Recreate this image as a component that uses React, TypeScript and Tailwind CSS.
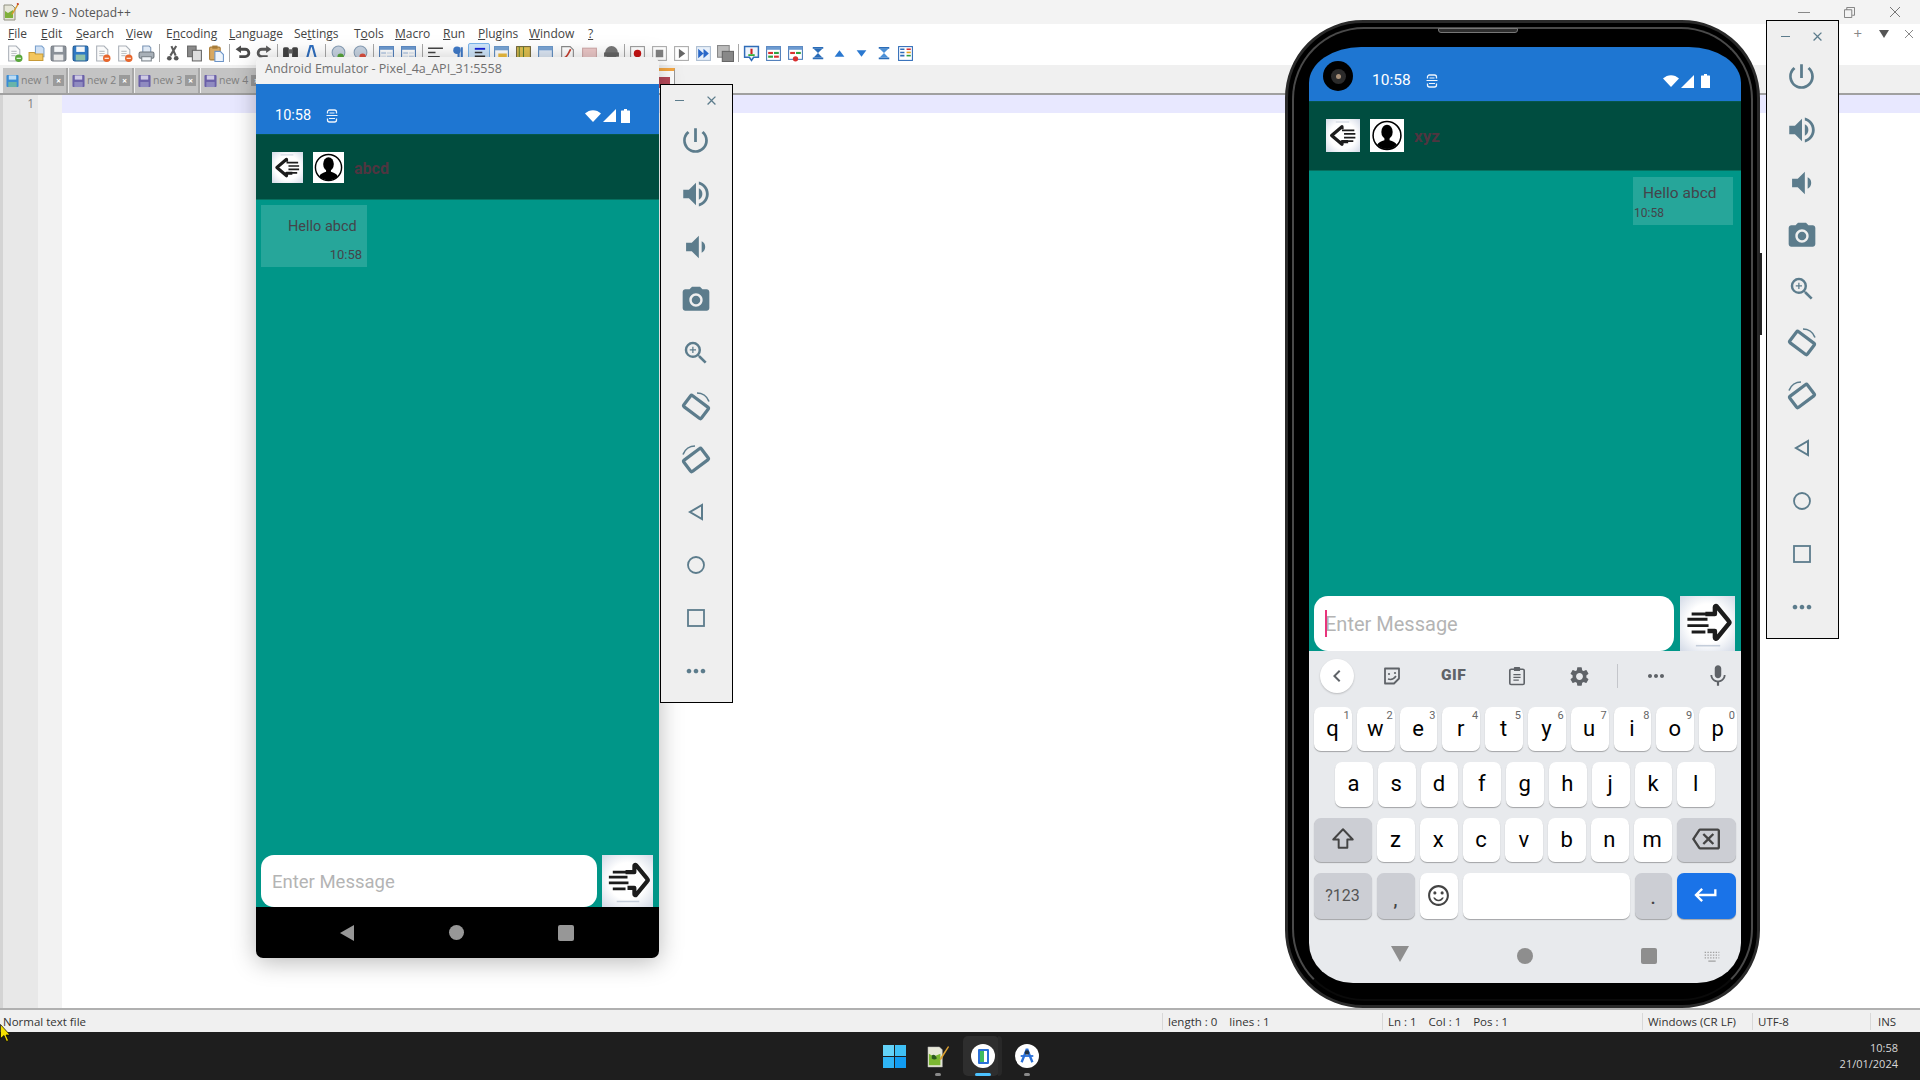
import React from "react";
import {
  MdPowerSettingsNew, MdVolumeUp, MdVolumeDown, MdPhotoCamera, MdZoomIn, MdMoreHoriz, MdSettings, MdMic,
  MdKeyboardReturn, MdOutlineSentimentSatisfied, MdOutlineBackspace, MdChevronLeft, MdClose,
} from "react-icons/md";

const NP = "font-['Open_Sans','Liberation_Sans',sans-serif]";
const RB = "font-['Roboto','Liberation_Sans',sans-serif]";

function U({ t, i }: { t: string; i: number }) {
  return (
    <span>
      {t.slice(0, i)}
      <span className="underline">{t[i]}</span>
      {t.slice(i + 1)}
    </span>
  );
}

const menus: [string, number, number][] = [
  ["File", 0, 33], ["Edit", 0, 35], ["Search", 0, 50], ["View", 0, 40], ["Encoding", 1, 63], ["Language", 0, 65],
  ["Settings", 2, 60], ["Tools", 1, 41], ["Macro", 0, 48], ["Run", 0, 35], ["Plugins", 0, 51], ["Window", 0, 59], ["?", 0, 12],
];

function ToolIcon({ k }: { k: string }) {
  const c = "w-[17px] h-[17px]";
  const doc = (badge?: string) => (
    <svg viewBox="0 0 16 16" className={c}>
      <path d="M2.5 1h7l3.500 3.500V15h-10.500z" fill="#fafafa" stroke="#aab0b8" />
      <path d="M5 6h5M5 8h5M5 10h4" stroke="#c0c4c8" />
      {badge && <circle cx="12" cy="12.500" r="3.500" fill={badge} />}
      {badge && <path d="M10 12.500h4" stroke="#fff" />}
    </svg>
  );
  const floppy = (f: string, l: string, s: string) => (
    <svg viewBox="0 0 16 16" className={c}>
      <rect x="1" y="1" width="14" height="14" rx="1.500" fill={f} stroke={s} />
      <rect x="4" y="1.500" width="8" height="5" fill="#f4f6f8" />
      <rect x="3.500" y="9" width="9" height="5.500" fill={l} />
    </svg>
  );
  const panel = (a: string, b: string) => (
    <svg viewBox="0 0 16 16" className={c}>
      <rect x="1.500" y="1.500" width="13" height="13" fill="#fff" stroke="#4a7ab8" />
      <rect x="1.500" y="1.500" width="13" height="3" fill="#6c9ad0" />
      <rect x="3" y="6.500" width="4.500" height="2" fill={a} />
      <rect x="8.500" y="6.500" width="4.500" height="2" fill={b} />
      <rect x="3" y="10" width="4.500" height="2" fill={b} />
      <rect x="8.500" y="10" width="4.500" height="2" fill={a} />
    </svg>
  );
  switch (k) {
    case "new": return doc("#5aa83c");
    case "open": return (
      <svg viewBox="0 0 16 16" className={c}>
        <path d="M7 1h6l2 2v8H7z" fill="#cfe0f4" stroke="#7aa0cc" />
        <path d="M1 7h5l1 1.500h7v6H1z" fill="#f3c65f" stroke="#c79a38" />
      </svg>
    );
    case "save": return floppy("#8a9098", "#e8e8e8", "#767c84");
    case "saveall": return floppy("#2f79c4", "#8fc0a8", "#20588f");
    case "close": return doc("#e8662c");
    case "closeall": return doc("#e8662c");
    case "print": return (
      <svg viewBox="0 0 16 16" className={c}>
        <path d="M4.500 1h6l1.500 1.500V7h-7.500z" fill="#dfe9f5" stroke="#7a94b4" />
        <rect x="1" y="6.500" width="14" height="6" rx="1.500" fill="#a8b0b8" stroke="#6c747c" />
        <rect x="3.500" y="11" width="9" height="4" fill="#eef2f6" stroke="#7a828a" />
      </svg>
    );
    case "cut": return (
      <svg viewBox="0 0 16 16" className={c}>
        <path d="M11.500 1L6 10M7 1l4 9" stroke="#5c5c5c" strokeWidth="2" fill="none" />
        <circle cx="5" cy="12.500" r="2.200" fill="#555" /><circle cx="11.500" cy="12.500" r="2.200" fill="#555" />
      </svg>
    );
    case "copy": return (
      <svg viewBox="0 0 16 16" className={c}>
        <rect x="1.500" y="1" width="8" height="10" fill="#8a8a8a" stroke="#666" />
        <rect x="6" y="5" width="8.500" height="10" fill="#dcdcdc" stroke="#666" />
      </svg>
    );
    case "paste": return (
      <svg viewBox="0 0 16 16" className={c}>
        <rect x="1.500" y="2" width="10" height="12" rx="1" fill="#d8a860" stroke="#a87c38" />
        <rect x="4" y="0.500" width="5" height="3" fill="#a87c38" />
        <path d="M6.500 6h5l3 3v6.500h-8z" fill="#eef4fb" stroke="#6c94c8" />
      </svg>
    );
    case "undo": return (
      <svg viewBox="0 0 16 16" className={c}>
        <path d="M5 4h5.500a3.500 3.500 0 010 7H5" stroke="#4a4a4a" strokeWidth="2.600" fill="none" />
        <path d="M6.500 0.500v7L1.500 4z" fill="#4a4a4a" />
      </svg>
    );
    case "redo": return (
      <svg viewBox="0 0 16 16" className={c}>
        <path d="M11 4H5.500a3.500 3.500 0 000 7H11" stroke="#5a5a5a" strokeWidth="2.600" fill="none" />
        <path d="M9.500 0.500v7l5-3.500z" fill="#5a5a5a" />
      </svg>
    );
    case "find": return (
      <svg viewBox="0 0 16 16" className={c}>
        <rect x="1" y="2" width="5.500" height="12" rx="1.500" fill="#444" />
        <rect x="9.500" y="2" width="5.500" height="12" rx="1.500" fill="#444" />
        <rect x="6" y="4" width="4" height="4" fill="#666" />
      </svg>
    );
    case "replace": return (
      <svg viewBox="0 0 16 16" className={c}>
        <path d="M3 12L6 1h2l3 11" stroke="#2f6fc0" strokeWidth="2" fill="none" />
        <path d="M9 13h6" stroke="#2f6fc0" strokeWidth="2" />
      </svg>
    );
    case "zin": case "zout": return (
      <svg viewBox="0 0 16 16" className={c}>
        <circle cx="8" cy="7" r="6" fill="#c8d4e2" stroke="#8aa0b8" />
        <circle cx="10" cy="11" r="3" fill={k === "zin" ? "#58a83c" : "#e05040"} />
      </svg>
    );
    case "win1": return panel("#c8d8ec", "#e4ecf6");
    case "wrap": return (
      <svg viewBox="0 0 16 16" className={c}>
        <path d="M1 3h14M1 7h7M1 11h11" stroke="#444" strokeWidth="1.500" />
      </svg>
    );
    case "para": return (
      <svg viewBox="0 0 16 16" className={c}>
        <path d="M9 2v12M12 2v12" stroke="#3f7ac8" strokeWidth="2" /><circle cx="7.500" cy="5" r="3.500" fill="#3f7ac8" />
      </svg>
    );
    case "indent": return (
      <div className="w-[22px] h-[20px] bg-[#cfe6fb] border border-[#7ab4ea] flex items-center justify-center rounded-[2px]">
        <svg viewBox="0 0 16 16" className="w-[15px] h-[15px]">
          <path d="M3 3h11" stroke="#1420d8" strokeWidth="2" />
          <path d="M3 7h8M3 11h11" stroke="#333" strokeWidth="1.500" />
        </svg>
      </div>
    );
    case "yellow": return (
      <svg viewBox="0 0 16 16" className={c}>
        <rect x="1.500" y="1.500" width="13" height="13" fill="#fff" stroke="#5a8ac0" />
        <rect x="1.500" y="1.500" width="13" height="3.500" fill="#78a4d4" />
        <rect x="5" y="8" width="8" height="4" fill="#f0c040" />
      </svg>
    );
    case "map": return (
      <svg viewBox="0 0 16 16" className={c}>
        <rect x="1.500" y="1.500" width="13" height="13" fill="#e0c050" stroke="#70643a" />
        <path d="M4 1.500v13M8 1.500v13" stroke="#608030" />
      </svg>
    );
    case "lang": return (
      <svg viewBox="0 0 16 16" className={c}>
        <rect x="1.500" y="1.500" width="13" height="13" fill="#dde8f6" stroke="#5a8ac0" />
        <rect x="1.500" y="1.500" width="13" height="3.500" fill="#7aa4d4" />
      </svg>
    );
    case "fn": return (
      <svg viewBox="0 0 16 16" className={c}>
        <path d="M2.500 1.500h8l3 3v10h-11z" fill="#fff" stroke="#8a8a8a" />
        <path d="M5 12c3-1 4-5 6-8" stroke="#c84030" strokeWidth="1.600" fill="none" />
      </svg>
    );
    case "folder": return (
      <svg viewBox="0 0 16 16" className={c}>
        <rect x="1.500" y="3" width="13" height="10" fill="#ecc8c8" stroke="#d0a8a8" />
      </svg>
    );
    case "mon": return (
      <svg viewBox="0 0 16 16" className={c}>
        <circle cx="8" cy="7" r="6" fill="#777" /><rect x="1" y="7" width="14" height="4" fill="#666" />
      </svg>
    );
    case "rec": return (
      <svg viewBox="0 0 16 16" className={c}>
        <rect x="1.500" y="1.500" width="13" height="13" fill="#fff" stroke="#9a9a9a" />
        <circle cx="8" cy="8" r="3.500" fill="#c81414" />
      </svg>
    );
    case "stop": return (
      <svg viewBox="0 0 16 16" className={c}>
        <rect x="1.500" y="1.500" width="13" height="13" fill="#fff" stroke="#aaa" />
        <rect x="4.500" y="4.500" width="7" height="7" fill="#808080" />
      </svg>
    );
    case "play": return (
      <svg viewBox="0 0 16 16" className={c}>
        <rect x="1.500" y="1.500" width="13" height="13" fill="#fff" stroke="#aaa" />
        <path d="M5.500 3.500v9l6-4.500z" fill="#666" />
      </svg>
    );
    case "ff": return (
      <svg viewBox="0 0 16 16" className={c}>
        <rect x="1.500" y="1.500" width="13" height="13" fill="#e8f0fa" stroke="#aabbd0" />
        <path d="M3 3.500v9L8 8zM8 3.500v9l5-4.500z" fill="#2a68c8" />
      </svg>
    );
    case "savem": return (
      <svg viewBox="0 0 16 16" className={c}>
        <rect x="0.500" y="0.500" width="11" height="11" fill="#bbb" stroke="#888" />
        <rect x="5" y="6" width="10.500" height="9.500" fill="#888" stroke="#666" />
      </svg>
    );
    case "bm": return (
      <svg viewBox="0 0 16 16" className={c}>
        <path d="M1.500 1.500h13v10H10l-2 3-2-3H1.500z" fill="#eef4fb" stroke="#2f6cb8" strokeWidth="1.400" />
        <path d="M8 3.500v5" stroke="#d02020" strokeWidth="2" /><path d="M5 9.500h6" stroke="#20a020" strokeWidth="1.500" />
      </svg>
    );
    case "diff": return panel("#d83030", "#30a040");
    case "diffx": return (
      <svg viewBox="0 0 16 16" className={c}>
        <rect x="1.500" y="1.500" width="13" height="12" fill="#fff" stroke="#4a7ab8" />
        <rect x="1.500" y="1.500" width="13" height="3" fill="#6c9ad0" />
        <rect x="3" y="6.500" width="4.500" height="2" fill="#d83030" />
        <rect x="8.500" y="6.500" width="4.500" height="2" fill="#30a040" />
        <circle cx="8" cy="13" r="2.500" fill="#d83030" />
      </svg>
    );
    case "first": return (
      <svg viewBox="0 0 16 16" className="w-[14px] h-[14px]">
        <path d="M2 2h12M2 14h12" stroke="#2a6cb8" strokeWidth="2" />
        <path d="M3 3l5 5 5-5zM3 13l5-5 5 5z" fill="#2a6cb8" />
      </svg>
    );
    case "up": return (
      <svg viewBox="0 0 16 16" className="w-[13px] h-[13px]"><path d="M2 12L8 4l6 8z" fill="#2a78d0" /></svg>
    );
    case "down": return (
      <svg viewBox="0 0 16 16" className="w-[13px] h-[13px]"><path d="M2 4l6 8 6-8z" fill="#2a78d0" /></svg>
    );
    case "last": return (
      <svg viewBox="0 0 16 16" className="w-[14px] h-[14px]">
        <path d="M2 2h12M2 14h12" stroke="#2a6cb8" strokeWidth="2" />
        <path d="M3 3l5 5 5-5zM3 13l5-5 5 5z" fill="#4a90d8" />
      </svg>
    );
    case "cols": return (
      <svg viewBox="0 0 16 16" className={c}>
        <rect x="1.500" y="1.500" width="13" height="13" fill="#fff" stroke="#2f6cb8" />
        <path d="M3 4h4M3 7h4M3 10h4" stroke="#2f6cb8" strokeWidth="1.500" />
        <path d="M9 4h4" stroke="#d83030" strokeWidth="1.500" /><path d="M9 7h4" stroke="#e8a020" strokeWidth="1.500" /><path d="M9 10h4" stroke="#30a040" strokeWidth="1.500" />
      </svg>
    );
    default: return null;
  }
}

const toolbar = [
  "new", "open", "save", "saveall", "close", "closeall", "print", "|", "cut", "copy", "paste", "|", "undo", "redo", "|",
  "find", "replace", "|", "zin", "zout", "|", "win1", "win1", "|", "wrap", "para", "indent", "yellow", "map", "lang", "fn", "folder", "mon", "|",
  "rec", "stop", "play", "ff", "savem", "|", "bm", "diff", "diffx", "first", "up", "down", "last", "cols",
];

function Floppy({ purple }: { purple?: boolean }) {
  return (
    <svg viewBox="0 0 14 14" className="w-[13px] h-[14px] shrink-0">
      <rect x="0.500" y="0.500" width="13" height="13" rx="1" fill={purple ? "#6a60a8" : "#3a8cd4"} />
      <rect x="3" y="1" width="8" height="4.500" fill={purple ? "#cfcbe4" : "#bcdcf4"} />
      <rect x="2.500" y="8" width="9" height="5.500" fill={purple ? "#8f8ac0" : "#6ab4a8"} />
    </svg>
  );
}

function Tab({ n, purple }: { n: number; purple?: boolean }) {
  return (
    <div className="w-[65px] h-full bg-[#c4c4c4] border-r-[2px] border-[#a8a8a8] flex items-center pl-[3px] gap-[2px] mr-[1px] shrink-0">
      <Floppy purple={purple} />
      <span className="text-[10.500px] text-[#808080] w-[30px] whitespace-nowrap">new {n}</span>
      <span className="w-[11px] h-[11px] bg-[#9a9a9a] text-white text-[9px] leading-[11px] text-center font-bold shrink-0">×</span>
    </div>
  );
}

function Notepad() {
  return (
    <div className={`flex flex-col h-[1032px] bg-white ${NP} text-[#333]`}>
      <div className="h-[24px] bg-[#f3f3f3] flex items-center relative shrink-0">
        <svg viewBox="0 0 16 18" className="w-[16px] h-[18px] ml-[3px]">
          <path d="M1 2h8l3 3v12H1z" fill="#e6e6d8" stroke="#909080" />
          <path d="M2 8l3 2 5-3v8H2z" fill="#7fb03a" />
          <path d="M15 0l1 1-6 10-2 1 1-2z" fill="#d89a2c" />
          <path d="M14.500 0l1.500 1-1 1-1.500-1z" fill="#c02020" />
        </svg>
        <span className="ml-[6px] text-[12px] text-[#555] pt-[1px]">new 9 - Notepad++</span>
        <div className="ml-auto flex items-center h-full text-[#666]">
          <span className="w-[12px] h-px bg-[#888] block mr-[34px]" />
          <svg viewBox="0 0 12 12" className="w-[11px] h-[11px] mr-[34px]"><path d="M0.500 3h8v8.500h-8zM3 3V0.500h8.500V9H9" fill="none" stroke="#777" /></svg>
          <svg viewBox="0 0 12 12" className="w-[12px] h-[12px] mr-[19px]"><path d="M1 1l10 10M11 1L1 11" stroke="#777" /></svg>
        </div>
      </div>
      <div className="h-[19px] flex items-center text-[12px] text-[#444] pl-[8px] shrink-0">
        {menus.map(([t, i, w]) => (
          <div key={t} className="shrink-0" style={{ width: w }}><U t={t} i={i} /></div>
        ))}
        <div className="ml-auto flex items-center pr-[6px] text-[#888]">
          <span className="text-[15px] leading-none mr-[17px]">+</span>
          <svg viewBox="0 0 10 8" className="w-[10px] h-[8px] mr-[15px]"><path d="M0 0h10L5 8z" fill="#555" /></svg>
          <svg viewBox="0 0 10 10" className="w-[10px] h-[10px]"><path d="M1 1l8 8M9 1L1 9" stroke="#888" /></svg>
        </div>
      </div>
      <div className="h-[23px] flex items-center pl-[3px] pb-[2px] border-b border-[#f0f0f0] shrink-0">
        {toolbar.map((k, i) =>
          k === "|" ? (
            <div key={i} className="w-[4.200px] flex justify-center shrink-0"><div className="w-px h-[18px] bg-[#a8a8a8]" /></div>
          ) : (
            <div key={i} className="w-[22px] h-[20px] flex items-center justify-center shrink-0"><ToolIcon k={k} /></div>
          ),
        )}
      </div>
      <div className="h-[27px] bg-[#f0f0f0] flex items-stretch pl-[3px] pt-[2px] shrink-0">
        <Tab n={1} />
        <Tab n={2} purple />
        <Tab n={3} purple />
        <Tab n={4} purple />
        <div className="w-[336px] shrink-0" />
        <div className="w-[72px] bg-white border-t-[3px] border-[#f5a742] border-r border-r-[#999] flex items-center justify-end pr-[4px] shrink-0">
          <span className="w-[11px] h-[11px] bg-[#b84a5a]" />
        </div>
      </div>
      <div className="flex-1 flex border-t-[2px] border-[#a0a0a0] border-b-[2px] border-b-[#b0b0b0] min-h-0">
        <div className="w-[62px] bg-[#e8e8e8] border-l-[3px] border-[#d4d4d4] flex shrink-0">
          <div className="w-[35px] text-right text-[12px] text-[#808080] leading-[18px] pr-[4px]">1</div>
          <div className="flex-1 bg-[#f2f2f2]" />
        </div>
        <div className="flex-1"><div className="h-[18px] bg-[#e8e8ff]" /></div>
      </div>
      <div className="h-[22px] bg-[#f0f0f0] flex items-center text-[11.500px] text-[#333] pt-[1px] shrink-0">
        <div className="w-[1162px] pl-[3px]">Normal text file</div>
        <div className="w-[220px] pl-[5px] border-l border-[#d8d8d8]">length : 0 &nbsp;&nbsp; lines : 1</div>
        <div className="w-[260px] pl-[5px] border-l border-[#d8d8d8]">Ln : 1 &nbsp;&nbsp; Col : 1 &nbsp;&nbsp; Pos : 1</div>
        <div className="w-[110px] pl-[5px] border-l border-[#d8d8d8]">Windows (CR LF)</div>
        <div className="w-[118px] pl-[5px] border-l border-[#d8d8d8]">UTF-8</div>
        <div className="flex-1 pl-[7px] border-l border-[#d8d8d8]">INS</div>
      </div>
    </div>
  );
}

function Taskbar() {
  return (
    <div className={`h-[48px] bg-[#1e1e1e] flex items-center justify-center relative ${NP}`}>
      <div className="w-[44px] flex justify-center">
        <div className="w-[23px] h-[23px] grid grid-cols-2 gap-[1px]">
          <div className="bg-[#63d2f7]" /><div className="bg-[#3fc0f5]" /><div className="bg-[#2fb4f5]" /><div className="bg-[#119cf2]" />
        </div>
      </div>
      <div className="w-[44px] flex flex-col items-center relative">
        <svg viewBox="0 0 24 24" className="w-[23px] h-[23px]">
          <path d="M1 2h12l3 3v18H1z" fill="#e8e8d8" stroke="#aaa" strokeWidth="0.500" />
          <path d="M2 9l5 3 7-3v12H2z" fill="#7cb832" />
          <path d="M5 11c2-2 4 0 5 2s-3 3-5 1z" fill="#2c5a1c" />
          <path d="M22 1l1 1-8 13-2 1 1-3z" fill="#dca030" />
        </svg>
        <div className="absolute top-[28px] w-[6px] h-[3px] rounded-full bg-[#8a8a8a]" />
      </div>
      <div className="w-[44px] flex justify-center relative">
        <div className="absolute top-[-8px] left-[3px] w-[36px] h-[40px] bg-[#2e2e2e] rounded-[5px]" />
        <div className="absolute top-[-8px] left-[38px] w-[4px] h-[40px] bg-[#282828] rounded-r-[4px]" />
        <div className="relative left-[1px] w-[24px] h-[24px] rounded-full bg-white flex items-center justify-center">
          <div className="w-[11px] h-[15px] border-[2px] border-[#2a70d8] rounded-[1px] flex"><div className="w-[4px] h-full bg-[#3fbc60]" /></div>
        </div>
        <div className="absolute top-[29px] left-[15px] w-[16px] h-[3px] rounded-full bg-[#4cc2ff]" />
      </div>
      <div className="w-[44px] flex justify-center relative">
        <div className="relative left-[1px] w-[24px] h-[24px] rounded-full bg-white flex items-center justify-center">
          <svg viewBox="0 0 20 20" className="w-[18px] h-[18px]">
            <path d="M10 2L4 17M10 2l6 15" stroke="#2a70d8" strokeWidth="2.600" fill="none" />
            <path d="M3 10h14" stroke="#2a70d8" strokeWidth="2" /><circle cx="10" cy="6" r="2.500" fill="#234" />
          </svg>
        </div>
        <div className="absolute top-[29px] left-[20px] w-[6px] h-[3px] rounded-full bg-[#8a8a8a]" />
      </div>
      <div className="absolute right-[22px] top-0 h-full flex flex-col justify-center items-end text-[11px] leading-[16px] text-[#d8d8d8]">
        <span>10:58</span>
        <span>21/01/2024</span>
      </div>
    </div>
  );
}

function RotateIcon({ flip }: { flip?: boolean }) {
  return (
    <svg viewBox="0 0 32 32" className={`w-[32px] h-[32px] ${flip ? "-scale-x-100" : ""}`}>
      <rect x="5" y="10" width="22" height="14" rx="1.500" transform="rotate(37 16 17)" fill="none" stroke="#5c7c8c" strokeWidth="3.200" />
      <path d="M17 3c5 0 10 3 12 8.500" fill="none" stroke="#5c7c8c" strokeWidth="1.600" />
    </svg>
  );
}

function Panel({ className }: { className: string }) {
  const cl = "w-[30px] h-[30px] text-[#5c7c8c]";
  const items = [
    <MdPowerSettingsNew className="w-[33px] h-[33px] text-[#5c7c8c]" />,
    <MdVolumeUp className="w-[34px] h-[34px] text-[#5c7c8c]" />,
    <MdVolumeDown className="w-[34px] h-[34px] text-[#5c7c8c]" />,
    <MdPhotoCamera className="w-[32px] h-[32px] text-[#5c7c8c]" />,
    <MdZoomIn className={cl} />,
    <RotateIcon />,
    <RotateIcon flip />,
    <svg viewBox="0 0 20 20" className="w-[20px] h-[20px]"><path d="M16 3v14L4 10z" fill="none" stroke="#5c7c8c" strokeWidth="2" /></svg>,
    <svg viewBox="0 0 20 20" className="w-[20px] h-[20px]"><circle cx="10" cy="10" r="8" fill="none" stroke="#5c7c8c" strokeWidth="1.800" /></svg>,
    <svg viewBox="0 0 20 20" className="w-[20px] h-[20px]"><rect x="2" y="2" width="16" height="16" fill="none" stroke="#5c7c8c" strokeWidth="1.800" /></svg>,
    <MdMoreHoriz className="w-[28px] h-[28px] text-[#5c7c8c]" />,
  ];
  return (
    <div className={`absolute w-[73px] h-[619px] bg-[#efefef] border-[1.500px] border-black flex flex-col ${className}`}>
      <div className="flex h-[29px] mt-[1px] items-center justify-between pl-[14px] pr-[13px] shrink-0">
        <div className="w-[9px] h-[1.500px] bg-[#5c7c8c]" />
        <MdClose className="w-[15px] h-[15px] text-[#5c7c8c]" />
      </div>
      <div className="flex flex-col items-center pr-[2px] -mt-[1px]">
        {items.map((it, i) => (
          <div key={i} className="h-[53.100px] flex items-center justify-center">{it}</div>
        ))}
      </div>
    </div>
  );
}

function StatusIcons({ tight }: { tight?: boolean }) {
  return (
    <div className="flex items-center">
      <svg viewBox="0 0 16 12" className="w-[16px] h-[12px]"><path d="M0 3.500C4.500-1 11.500-1 16 3.500L8 12z" fill="#fff" /></svg>
      <svg viewBox="0 0 13 13" className="w-[13px] h-[13px] ml-[2px]"><path d="M13 0v13H0z" fill="#fff" /></svg>
      <svg viewBox="0 0 9 14" className={`w-[9px] h-[14px] ${tight ? "ml-[5px]" : "ml-[7px]"}`}><path d="M3 0h3v1.500h2.500a.5.5 0 01.5.5v11.500a.5.5 0 01-.5.5H.5a.5.5 0 01-.5-.5V2a.5.5 0 01.5-.5H3z" fill="#fff" /></svg>
    </div>
  );
}

function SimIcon() {
  return (
    <svg viewBox="0 0 12 14" className="w-[12px] h-[14px] block">
      <path d="M1.500 4.500V3a2 2 0 012-2h5a2 2 0 012 2v1.500M1.500 9.500V11a2 2 0 002 2h5a2 2 0 002-2V9.500" fill="none" stroke="#f0f5fc" strokeWidth="1.300" />
      <path d="M0.500 6.500h11M3 9.500h6M3.500 4h5" stroke="#f0f5fc" strokeWidth="1.100" />
    </svg>
  );
}

function BackIcon({ className }: { className: string }) {
  return (
    <div className={`bg-[radial-gradient(circle,#ffffff_55%,#d2d9e6)] flex items-center justify-center ${className}`}>
      <svg viewBox="0 0 32 32" className="w-full h-full">
        <path d="M15 10V7.500L5 16l10 8.500V22H21" fill="none" stroke="#1c1c1c" strokeWidth="3.200" strokeLinejoin="round" />
        <path d="M15 11h12M17 14.500h11M17 18h11M15 21.500h11" stroke="#1c1c1c" strokeWidth="1.700" />
        <path d="M9 3h13" stroke="#c8d0dc" strokeWidth="1" />
      </svg>
    </div>
  );
}

function PersonIcon({ className }: { className: string }) {
  return (
    <div className={`bg-white flex items-center justify-center ${className}`}>
      <svg viewBox="0 0 32 32" className="w-full h-full">
        <circle cx="16" cy="16" r="13.500" fill="#fff" stroke="#000" strokeWidth="1.500" />
        <ellipse cx="16" cy="12.500" rx="5.500" ry="7" fill="#000" />
        <path d="M13.500 18h5v2.500c3 1 6 2 7 4.500a13 13 0 01-19 0c1-2.500 4-3.500 7-4.500z" fill="#000" />
      </svg>
    </div>
  );
}

function SendIcon() {
  return (
    <div className="w-full h-full bg-[radial-gradient(circle,#ffffff_50%,#d2d9e6)]">
      <svg viewBox="0 0 52 52" className="w-full h-full">
        <path d="M24 17h9v-6.500a1 1 0 011.700-.7L46 23.600a2 2 0 010 2.800L34.700 40.200a1 1 0 01-1.700-.7V33h-7" fill="none" stroke="#1c1c1c" strokeWidth="4.200" strokeLinejoin="round" />
        <path d="M11 17h14M7 22h19M7 28h20M11 34h13" stroke="#1c1c1c" strokeWidth="2.800" />
        <path d="M15 47h23" stroke="#c4cdda" strokeWidth="1.500" />
      </svg>
    </div>
  );
}

function Emulator() {
  return (
    <div className={`absolute left-[256px] top-[57px] w-[403px] h-[901px] rounded-[7px] shadow-[0_4px_24px_rgba(0,0,0,0.28)] flex flex-col overflow-hidden ${RB}`}>
      <div className={`h-[27px] bg-[#f2f2f2] flex items-center pl-[9px] pb-[2px] text-[12.500px] text-[#707070] shrink-0 ${NP}`}>
        Android Emulator - Pixel_4a_API_31:5558
      </div>
      <div className="h-[50px] bg-[#1e76d2] flex items-center pl-[19px] pr-[29px] pt-[13px] text-white shrink-0">
        <span className="text-[14.500px]">10:58</span>
        <span className="ml-[15px]"><SimIcon /></span>
        <div className="ml-auto"><StatusIcons tight /></div>
      </div>
      <div className="h-[66px] bg-[#004d40] flex items-center pl-[16px] shrink-0 border-t border-[#05574a] border-b border-b-[#06705f]">
        <BackIcon className="w-[31px] h-[31px]" />
        <PersonIcon className="w-[31px] h-[31px] ml-[10px]" />
        <span className="ml-[10px] pt-[3px] text-[16px] font-bold text-[#4f3540]">abcd</span>
      </div>
      <div className="flex-1 bg-[#009688] flex flex-col justify-between px-[5px] pt-[5px] min-h-0">
        <div className="w-[106px] h-[62px] bg-[#26a69a] flex flex-col text-[#44444a]">
          <div className="text-[14.500px] pl-[27px] pt-[13px] leading-[17px]">Hello abcd</div>
          <div className="text-[13px] self-end pr-[5px] mt-[12px] leading-[15px]">10:58</div>
        </div>
        <div className="flex h-[52px] items-stretch">
          <div className="w-[336px] bg-white rounded-[13px] flex items-center pl-[11px] pt-[3px] text-[18.500px] text-[#b4b4b4]">Enter Message</div>
          <div className="w-[51px] ml-[5px]"><SendIcon /></div>
        </div>
      </div>
      <div className="h-[51px] bg-black flex items-center shrink-0 pl-[83px]">
        <svg viewBox="0 0 16 18" className="w-[16px] h-[18px]"><path d="M15 1v16L1 9z" fill="#979797" /></svg>
        <div className="w-[15px] h-[15px] rounded-full bg-[#979797] ml-[94px]" />
        <div className="w-[16px] h-[16px] rounded-[2px] bg-[#979797] ml-[94px]" />
      </div>
    </div>
  );
}

const rows: string[][] = [
  ["q", "w", "e", "r", "t", "y", "u", "i", "o", "p"],
  ["a", "s", "d", "f", "g", "h", "j", "k", "l"],
  ["z", "x", "c", "v", "b", "n", "m"],
];
const sup = ["1", "2", "3", "4", "5", "6", "7", "8", "9", "0"];

function Key({ children, w = "w-[37.800px]", gray, n, h = "h-[45px]", blue }: { children?: React.ReactNode; w?: string; gray?: boolean; n?: string; h?: string; blue?: boolean }) {
  const bg = blue ? "bg-[#1a73e8] text-white" : gray ? "bg-[#ccced4] text-[#444]" : "bg-white text-black";
  return (
    <div className={`relative ${w} ${h} ${bg} rounded-[7px] shadow-[0_1px_1px_rgba(0,0,0,0.3)] flex items-center justify-center text-[22px] pb-[2px] pr-[1px] shrink-0`}>
      {children}
      {n && <span className="absolute right-[2px] top-[2px] text-[11px] leading-[13px] text-[#666]">{n}</span>}
    </div>
  );
}

function Keyboard() {
  const ic = "text-[#5f6368]";
  return (
    <div className="h-[332px] bg-[#e8eaed] flex flex-col px-[5px] shrink-0">
      <div className="h-[50px] flex items-center relative shrink-0">
        <div className="w-[34px] h-[34px] ml-[6px] rounded-full bg-white shadow-[0_1px_2px_rgba(0,0,0,0.2)] flex items-center justify-center shrink-0">
          <MdChevronLeft className={`w-[24px] h-[24px] ${ic}`} />
        </div>
        <svg viewBox="0 0 20 20" className="w-[20px] h-[20px] ml-[28px] shrink-0">
          <path d="M3 2.500h14v10l-5 5H3z" fill="none" stroke="#5f6368" strokeWidth="1.800" strokeLinejoin="round" />
          <circle cx="7" cy="8" r="1.100" fill="#5f6368" /><circle cx="13" cy="7" r="1.100" fill="#5f6368" />
          <path d="M6 13c3 1 6 0 8-3" fill="none" stroke="#5f6368" strokeWidth="1.500" />
        </svg>
        <span className="ml-[33px] text-[15.500px] font-black text-[#5f6368] w-[37px] text-center shrink-0 tracking-[0.5px]">GIF</span>
        <svg viewBox="0 0 20 22" className="w-[18px] h-[22px] ml-[36px] shrink-0">
          <rect x="2" y="3.500" width="16" height="17" rx="1.500" fill="none" stroke="#5f6368" strokeWidth="1.800" />
          <rect x="6.500" y="1" width="7" height="4.500" rx="1" fill="#5f6368" />
          <path d="M6 9.500h8M6 12.500h8M6 15.500h6" stroke="#5f6368" strokeWidth="1.500" />
        </svg>
        <MdSettings className={`w-[23px] h-[23px] ml-[42px] shrink-0 ${ic}`} />
        <div className="w-px h-[24px] bg-[#c4c6cb] ml-[26px] shrink-0" />
        <MdMoreHoriz className={`w-[24px] h-[24px] ml-[26px] shrink-0 ${ic}`} />
        <MdMic className={`w-[26px] h-[26px] ml-[37px] shrink-0 ${ic}`} />
      </div>
      <div className="flex gap-[5px] mt-[6px] shrink-0">
        {rows[0].map((k, i) => <Key key={k} n={sup[i]} h="h-[44px]">{k}</Key>)}
      </div>
      <div className="flex gap-[5px] mt-[11px] pl-[21px] shrink-0">
        {rows[1].map((k) => <Key key={k}>{k}</Key>)}
      </div>
      <div className="flex gap-[5px] mt-[11px] shrink-0">
        <Key w="w-[58px]" gray h="h-[44px]">
          <svg viewBox="0 0 24 24" className="w-[26px] h-[26px]"><path d="M12 3L3 12.500h5V20h8v-7.500h5z" fill="none" stroke="#444" strokeWidth="1.800" strokeLinejoin="round" /></svg>
        </Key>
        {rows[2].map((k) => <Key key={k} h="h-[44px]">{k}</Key>)}
        <Key w="w-[59px]" gray h="h-[44px]"><MdOutlineBackspace className="w-[28px] h-[28px] text-[#444]" /></Key>
      </div>
      <div className="flex gap-[5px] mt-[11px] shrink-0">
        <Key w="w-[58px]" gray h="h-[46px]"><span className="text-[16px] text-[#555] pt-[2px]">?123</span></Key>
        <Key gray h="h-[46px]"><span className="text-[16px] font-bold pt-[12px]">,</span></Key>
        <Key h="h-[46px]"><MdOutlineSentimentSatisfied className="w-[25px] h-[25px] text-[#444]" /></Key>
        <Key w="w-[167px]" h="h-[46px]" />
        <Key gray h="h-[46px]"><span className="text-[16px] font-bold pt-[8px]">.</span></Key>
        <Key w="w-[59px]" blue h="h-[46px]"><MdKeyboardReturn className="w-[28px] h-[28px]" /></Key>
      </div>
      <div className="flex-1 flex items-center pl-[77px] relative pt-[10px]">
        <svg viewBox="0 0 18 16" className="w-[18px] h-[16px] -mt-[4px]"><path d="M0 0h18L9 16z" fill="#8e8e8e" /></svg>
        <div className="w-[16px] h-[16px] rounded-full bg-[#8e8e8e] ml-[108px]" />
        <div className="w-[16px] h-[16px] rounded-[2px] bg-[#8e8e8e] ml-[108px]" />
        <svg viewBox="0 0 18 12" className="w-[18px] h-[11px] ml-[46px]">
          <path d="M1 1.500h16M1 4.500h16M1 7.500h16" stroke="#a0a0a0" strokeWidth="1.500" strokeDasharray="1.500 1.500" />
          <path d="M5 11h8" stroke="#a0a0a0" strokeWidth="1.500" />
        </svg>
      </div>
    </div>
  );
}

function Phone() {
  return (
    <div className={`absolute left-[1285px] top-[20px] w-[475px] h-[988px] rounded-[78px] bg-black border-[3px] border-[#2a2a2a] ${RB}`}>
      <div className="absolute inset-[4px] rounded-[72px] border-[2px] border-[#4a4a4a] border-b-[#0a0a0a]" />
      <div className="absolute left-[150px] top-[5px] w-[80px] h-[5px] bg-[#2e2e2e] rounded-b-[3px] border border-[#777]" />
      <div className="absolute right-[-5px] top-[230px] w-[3px] h-[82px] bg-[#222]" />
      <div className="absolute left-[21px] top-[24px] w-[432px] h-[936px] flex flex-col overflow-hidden rounded-tl-[52px_36px] rounded-tr-[52px_36px] rounded-bl-[44px_40px] rounded-br-[44px_40px]">
        <div className="h-[54px] bg-[#1e76d2] flex items-center pl-[63px] pr-[31px] pt-[14px] text-white shrink-0 relative">
          <div className="absolute left-[14px] top-[14px] w-[30px] h-[30px] rounded-full bg-black flex items-center justify-center">
            <div className="w-[15px] h-[15px] rounded-full bg-[#2b2b2b] flex items-center justify-center"><div className="w-[5px] h-[5px] rounded-full bg-[#a89078]" /></div>
          </div>
          <span className="text-[15.500px]">10:58</span>
          <span className="ml-[15px]"><SimIcon /></span>
          <div className="ml-auto"><StatusIcons /></div>
        </div>
        <div className="h-[70px] bg-[#004d40] flex items-center pl-[17px] pb-[1px] shrink-0 border-t border-[#05574a] border-b border-b-[#06705f]">
          <BackIcon className="w-[34px] h-[33px]" />
          <PersonIcon className="w-[34px] h-[33px] ml-[10px]" />
          <span className="ml-[10px] pt-[3px] text-[17px] font-bold text-[#4f3540]">xyz</span>
        </div>
        <div className="flex-1 bg-[#009688] flex flex-col justify-between min-h-0">
          <div className="w-[100px] h-[48px] self-end mr-[8px] mt-[6px] bg-[#26a69a] text-[#44444a] flex flex-col">
            <div className="text-[15.500px] pl-[10px] pt-[7px] leading-[18px]">Hello abcd</div>
            <div className="text-[12px] pl-[1px] mt-[4px] leading-[14px]">10:58</div>
          </div>
          <div className="flex h-[55px] pl-[5px] items-stretch">
            <div className="w-[360px] bg-white rounded-[14px] flex items-center pl-[11px] text-[20px] text-[#b4b4b4] relative">
              <div className="absolute left-[11px] top-[14px] w-[2px] h-[27px] bg-[#e8347c]" />
              Enter Message
            </div>
            <div className="w-[55px] ml-[6px]"><SendIcon /></div>
          </div>
        </div>
        <Keyboard />
      </div>
    </div>
  );
}

export default function App() {
  return (
    <div className="relative w-[1920px] h-[1080px] overflow-hidden bg-white">
      <Notepad />
      <Taskbar />
      <Emulator />
      <Panel className="left-[660px] top-[84px]" />
      <Phone />
      <Panel className="left-[1766px] top-[20px]" />
      <svg viewBox="0 0 10 18" className="absolute left-0 top-[1024px] w-[10px] h-[18px]">
        <path d="M0.500 0.500v14l3.500-3 2.500 6 2-1-2.500-5.500H10z" fill="#f5e000" stroke="#000" strokeWidth="0.700" />
      </svg>
    </div>
  );
}
